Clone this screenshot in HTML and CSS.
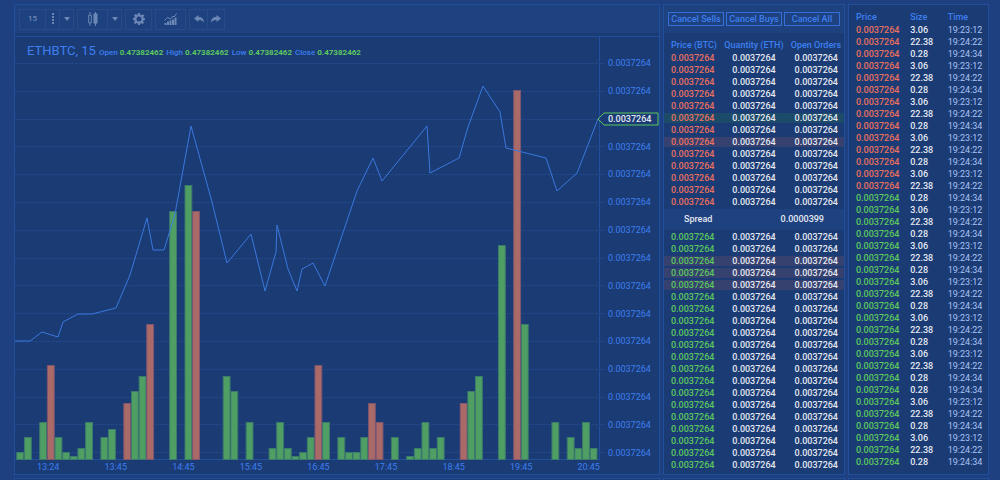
FILE: index.html
```html
<!DOCTYPE html>
<html lang="en">
<head>
<meta charset="utf-8">
<meta name="viewport" content="width=device-width, initial-scale=1">
<title>ETHBTC</title>
<link rel="stylesheet" href="styles.css">
</head>
<body>
<main class="workspace">
  <section class="panel chart-panel" aria-label="Chart">
    <div class="toolbar">
      <div class="tool-group">
        <button class="tool tool-wide" type="button">15</button>
        <button class="tool tool-narrow" type="button" aria-label="Intervals">
          <svg width="4" height="12" viewBox="0 0 4 12"><path d="M1 0h2v2H1zM1 3h2v2H1zM1 6h2v2H1zM1 9h2v2H1z"/></svg>
        </button>
        <button class="tool tool-narrow" type="button" aria-label="More intervals">
          <svg width="6" height="4" viewBox="0 0 6 4"><path d="M0 0h6L3 4z"/></svg>
        </button>
      </div>
      <div class="tool-group">
        <button class="tool tool-large" type="button" aria-label="Candles">
          <svg width="10" height="14" viewBox="0 0 10 14"><path d="M2 0v3M2 11v2.500M0.700 3.200h2.600v7.600h-2.600z" fill="none" stroke="currentColor"/><path d="M7 0h1v1.500h1.500v10H8V14H7v-2.500H5.500v-10H7z"/></svg>
        </button>
        <button class="tool tool-narrow" type="button" aria-label="Chart types">
          <svg width="6" height="4" viewBox="0 0 6 4"><path d="M0 0h6L3 4z"/></svg>
        </button>
      </div>
      <div class="tool-group">
        <button class="tool tool-wide" type="button" aria-label="Settings">
          <svg width="12" height="12" viewBox="0 0 24 24"><path fill-rule="evenodd" d="M10 0h4l.7 3.300 2.400 1L20 2.500 22.500 5l-1.800 2.900 1 2.400L24 10.500v3.500l-2.800.5-1 2.400 1.800 2.600-2.600 2.600-2.800-1.800-2.400 1L13.700 24h-3.500l-.7-2.800-2.400-1L4.300 22l-2.500-2.600 1.800-2.700-1-2.400L0 13.700V10.200l2.700-.6 1-2.400-1.600-2.700 2.500-2.500L7.300 3.700l2.100-.9zM12 7a5 5 0 1 0 0 10 5 5 0 0 0 0-10z"/></svg>
        </button>
      </div>
      <div class="tool-group">
        <button class="tool tool-large" type="button" aria-label="Indicators">
          <svg width="13" height="12" viewBox="0 0 13 12"><path d="M0.500 10h2v2h-2zM3 8.500h2V12H3zM5.500 7.500h2V12h-2zM8 6.500h2V12H8zM10.500 4.500h2V12h-2z"/><path d="M0.500 7.500l3-3 3 1.500 2.500-3 1 1 2.500-3.500" fill="none" stroke="currentColor"/></svg>
        </button>
      </div>
      <div class="tool-group">
        <button class="tool tool-mid" type="button" aria-label="Undo">
          <svg width="10" height="8" viewBox="0 0 10 8"><path d="M0 3.500L4.500 0v2C8 2 10 4 10 7.500 8.500 5.500 7 5 4.500 5v2z"/></svg>
        </button>
        <button class="tool tool-mid" type="button" aria-label="Redo">
          <svg width="10" height="8" viewBox="0 0 10 8"><path d="M10 3.500L5.500 0v2C2 2 0 4 0 7.500 1.500 5.500 3 5 5.500 5v2z"/></svg>
        </button>
      </div>
    </div>
    <div class="chart">
      <div class="plot">
        <svg class="plot-drawing" id="plot" viewBox="15 37 584 422" preserveAspectRatio="none" role="img" aria-label="Price and volume"></svg>
        <div class="legend">
          <h1 class="symbol">ETHBTC, 15</h1>
          <span>Open <b>0.47382462</b></span>
          <span>High <b>0.47382462</b></span>
          <span>Low <b>0.47382462</b></span>
          <span>Close <b>0.47382462</b></span>
        </div>
      </div>
      <ol class="price-axis" id="price-axis"></ol>
      <ol class="time-axis">
        <li>13:24</li><li>13:45</li><li>14:45</li><li>15:45</li><li>16:45</li><li>17:45</li><li>18:45</li><li>19:45</li><li>20:45</li>
      </ol>
    </div>
  </section>

  <section class="panel book-panel" aria-label="Order book">
    <div class="actions">
      <button class="action" type="button">Cancel Sells</button>
      <button class="action" type="button">Cancel Buys</button>
      <button class="action" type="button">Cancel All</button>
    </div>
    <table class="data orders">
      <thead>
        <tr><th>Price (BTC)</th><th>Quantity (ETH)</th><th>Open Orders</th></tr>
      </thead>
      <tbody id="sells"></tbody>
      <tbody>
        <tr><td class="spread-cell" colspan="3"><div class="spread"><span>Spread</span><span>0.0000399</span></div></td></tr>
      </tbody>
      <tbody id="buys"></tbody>
    </table>
  </section>

  <section class="panel" aria-label="Trades">
    <table class="data trades">
      <thead>
        <tr><th>Price</th><th>Size</th><th>Time</th></tr>
      </thead>
      <tbody id="trades"></tbody>
    </table>
  </section>

  <section class="panel"></section>
  <section class="panel"></section>
  <section class="panel"></section>
</main>
<script src="app.js"></script>
</body>
</html>
```
FILE: styles.css
```css
:root {
  --page: #1e4080;
  --panel: #1b3b74;
  --bar: #1e427f;
  --line: #20509c;
  --tool-line: #284a85;
  --blue: #3d7ff0;
  --red: #e8705f;
  --green: #5cc85e;
  --white: #e4e8f2;
}

* {
  box-sizing: border-box;
}

body {
  margin: 0;
  background: var(--page);
  color: var(--white);
  font: 500 8px/12px Roboto, "Liberation Sans", sans-serif;
}

button {
  margin: 0;
  padding: 0;
  background: none;
  color: inherit;
  font: inherit;
  cursor: pointer;
}

ol {
  margin: 0;
  padding: 0;
  list-style: none;
}

.workspace {
  display: grid;
  grid-template-columns: minmax(0, 1fr) 182px 141px;
  grid-template-rows: auto minmax(0, 1fr);
  gap: 3px;
  height: 100vh;
  padding: 4px 11px 0 14px;
  overflow: hidden;
}

.panel {
  border: 1px solid var(--line);
  background: var(--panel);
}

.panel:nth-child(n + 4) {
  border-bottom: 0;
}

.book-panel {
  padding-bottom: 3px;
}

.chart-panel {
  display: flex;
  flex-direction: column;
}

/* Toolbar */

.toolbar {
  display: flex;
  align-items: center;
  gap: 3px;
  height: 28px;
  padding: 0 4px;
  background: var(--bar);
  color: #6c87b6;
}

.tool-group {
  display: flex;
  border: 1px solid var(--tool-line);
}

.tool {
  display: flex;
  align-items: center;
  justify-content: center;
  height: 19px;
  border: 0;
}

.tool + .tool {
  border-left: 1px solid var(--tool-line);
}

.tool-narrow {
  width: 14px;
}

.tool-mid {
  width: 17px;
}

.tool-wide {
  width: 25px;
}

.tool-large {
  width: 29px;
}

.tool svg {
  fill: currentColor;
}

/* Chart */

.chart {
  display: grid;
  flex: 1;
  grid-template-columns: minmax(0, 1fr) 59px;
  grid-template-rows: minmax(0, 1fr) 14px;
  margin-top: 3px;
  border-top: 1px solid var(--line);
}

.plot {
  position: relative;
  border-right: 1px solid var(--line);
  border-bottom: 1px solid var(--line);
}

.plot-drawing {
  position: absolute;
  inset: 0;
  width: 100%;
  height: 100%;
  overflow: visible;
}

.grid-line {
  stroke: #20488a;
  stroke-dasharray: 3 1;
}

.price-line {
  fill: none;
  stroke: #3a78de;
}

.bar-up {
  fill: #4f9f65;
  stroke: #3c7a6c;
}

.bar-down {
  fill: #a96a68;
  stroke: #80566f;
}

.grid-line,
.price-line {
  vector-effect: non-scaling-stroke;
}

.legend {
  position: relative;
  display: flex;
  align-items: baseline;
  gap: 3px;
  padding: 6px 12px;
  color: var(--blue);
}

.legend b {
  color: var(--green);
  font-weight: 700;
}

.symbol {
  margin: 0;
  font-size: 13px;
  font-weight: 400;
  line-height: 16px;
}

.price-axis {
  display: flex;
  flex-direction: column;
  justify-content: space-between;
  padding: 20px 0 1px 8px;
  color: var(--blue);
  font-size: 9px;
  font-weight: 400;
}

.price-axis li {
  position: relative;
  z-index: 0;
}

.price-axis .last-price {
  color: var(--white);
  font-weight: 500;
}

.last-price svg {
  position: absolute;
  z-index: -1;
  top: -1px;
  left: -11px;
  fill: var(--panel);
  stroke: var(--green);
}

.time-axis {
  display: flex;
  grid-column: 1 / -1;
  justify-content: space-between;
  padding: 1px 59px 1px 22px;
  color: var(--blue);
  font-size: 9px;
  font-weight: 400;
}

/* Order book and trades */

.actions {
  display: grid;
  grid-template-columns: repeat(3, 1fr);
  gap: 2px;
  height: 28px;
  padding: 7px 4px;
  background: var(--bar);
}

.action {
  border: 1px solid #3470d8;
  color: var(--blue);
  font-size: 9px;
  font-weight: 500;
  white-space: nowrap;
}

.data {
  width: 100%;
  border-spacing: 0;
  table-layout: fixed;
}

.data th,
.data td {
  padding: 0 6px 0 7px;
  font-size: 9px;
  line-height: 12px;
  text-align: left;
  white-space: nowrap;
}

.data th {
  color: var(--blue);
  font-weight: 500;
}

.data td {
  height: 12px;
}

.orders th {
  padding-top: 6px;
  padding-bottom: 1px;
}

.orders th:nth-child(2),
.orders td:nth-child(2) {
  width: 33%;
  padding: 0;
  text-align: center;
}

.orders th:nth-child(2) {
  padding-top: 6px;
  padding-bottom: 1px;
}

.orders th:nth-child(3),
.orders td:nth-child(3) {
  text-align: right;
}

.orders td {
  border: 1px solid transparent;
  border-width: 1px 0;
  background-clip: padding-box;
  line-height: 10px;
}

.marked-up td {
  background-color: #1c4a69;
}

.marked-down td {
  background-color: #36416f;
}

.orders .spread-cell {
  padding: 0;
}

.spread {
  display: flex;
  justify-content: space-between;
  padding: 0 20px;
  background: var(--bar);
  line-height: 21px;
}

.trades th {
  padding-top: 6px;
  padding-bottom: 1px;
}

.trades th:nth-child(1) {
  width: 39%;
}

.trades th:nth-child(2) {
  width: 27%;
}

.trades td:nth-child(3) {
  color: #a9c4f5;
  font-weight: 400;
}

.data .sell {
  color: var(--red);
}

.data .buy {
  color: var(--green);
}
```
FILE: app.js
```js
const PRICE = '0.0037264';

/* Volume bars: [slot, top, falling] */
const volumes = [
  [0, 452], [1, 437], [3, 422], [4, 365, 1], [5, 437], [6, 452], [7, 456], [8, 448], [9, 422],
  [11, 437], [12, 429], [14, 403, 1], [15, 391], [16, 376], [17, 324, 1], [20, 211], [22, 185],
  [23, 211, 1], [27, 376], [28, 391], [30, 422], [33, 448], [34, 422], [35, 448], [36, 456],
  [37, 452], [38, 437], [39, 365, 1], [40, 422], [42, 437], [43, 452], [44, 452], [45, 437],
  [46, 403, 1], [47, 422, 1], [49, 437], [51, 456], [52, 448], [53, 422], [54, 448], [55, 437],
  [58, 403, 1], [59, 391], [60, 376], [63, 245], [65, 90, 1], [66, 324], [70, 422], [72, 437],
  [73, 448], [74, 422], [75, 448]
];

const prices = [
  [15, 341], [30, 341], [42, 332], [58, 337], [63, 322], [78, 314], [92, 314], [116, 308],
  [130, 275], [147, 218], [153, 250], [164, 250], [175, 214], [191, 126], [212, 202], [227, 263],
  [251, 234], [265, 291], [276, 252], [277, 225], [288, 269], [297, 291], [302, 269], [313, 263],
  [325, 286], [357, 191], [373, 158], [382, 181], [427, 126], [430, 173], [459, 158], [468, 127],
  [483, 86], [500, 112], [506, 148], [546, 158], [557, 191], [577, 173], [598, 119]
];

const BASE = 459;
const FIRST = 16.3;
const STEP = 7.645;

let drawing = '';
for (let i = 0; i < 15; i++) {
  const y = Math.round(63 + i * 27.8) + 0.5;
  drawing += `<line class="grid-line" x1="15" x2="605" y1="${y}" y2="${y}"/>`;
}
for (const [slot, top, falling] of volumes) {
  const x = FIRST + slot * STEP + 0.5;
  drawing += `<rect class="${falling ? 'bar-down' : 'bar-up'}" x="${x}" y="${top + 0.5}" width="${STEP - 0.8}" height="${BASE - top}"/>`;
}
drawing += `<polyline class="price-line" points="${prices.map(p => p.join(',')).join(' ')}"/>`;
document.getElementById('plot').innerHTML = drawing;

const tag = '<svg width="62" height="14" viewBox="0 0 62 14"><path d="M1 7L7 1h54v12H7z"/></svg>';
document.getElementById('price-axis').innerHTML = Array.from({ length: 15 }, (_, i) =>
  i === 2 ? `<li class="last-price">${tag}${PRICE}</li>` : `<li>${PRICE}</li>`
).join('');

function orderRows(count, side, marks) {
  return Array.from({ length: count }, (_, i) =>
    `<tr class="${marks[i] || ''}"><td class="${side}">${PRICE}</td><td>${PRICE}</td><td>${PRICE}</td></tr>`
  ).join('');
}
document.getElementById('sells').innerHTML = orderRows(13, 'sell', { 5: 'marked-up', 7: 'marked-down' });
document.getElementById('buys').innerHTML = orderRows(20, 'buy', { 2: 'marked-down', 3: 'marked-down', 4: 'marked-down' });

const fills = [['3.06', '19:23:12'], ['22.38', '19:24:22'], ['0.28', '19:24:34']];
const order = Array.from({ length: 36 }, (_, i) => i % 3);
order.splice(30, 0, 2);
document.getElementById('trades').innerHTML = order.map((kind, i) =>
  `<tr><td class="${i < 14 ? 'sell' : 'buy'}">${PRICE}</td><td>${fills[kind][0]}</td><td>${fills[kind][1]}</td></tr>`
).join('');
```
